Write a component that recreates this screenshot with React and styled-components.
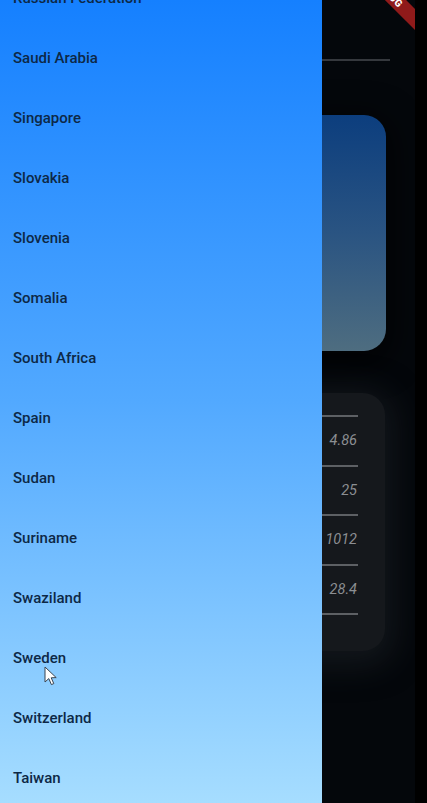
import React from "react";
import styled, { createGlobalStyle } from "styled-components";

const Global = createGlobalStyle`
  html, body { margin: 0; padding: 0; background: #000; }
  body { font-family: Roboto, "Noto Sans", sans-serif; }
  * { box-sizing: border-box; }
`;

const Screen = styled.div`
  display: flex;
  width: 427px;
  height: 803px;
  overflow: hidden;
  background: #000;
`;

const AppFrame = styled.div`
  position: relative;
  width: 415px;
  height: 803px;
  overflow: hidden;
  background: #04070b;
`;

const EdgeStrip = styled.div`
  flex: 1;
  background: #000;
`;

const Content = styled.div`
  display: flex;
  flex-direction: column;
  padding: 59px 25px 0 25px;
`;

const Divider = styled.div`
  height: 2px;
  background: #35383d;
`;

const BlueCard = styled.div`
  margin: 54px 4px 0 4px;
  height: 236px;
  border-radius: 22px;
  background: linear-gradient(180deg, #0c3e7e 0%, #2a5482 50%, #4e6d80 100%);
  box-shadow: 0 8px 30px 8px rgba(0, 0, 0, 0.6);
`;

const DarkCard = styled.div`
  margin: 42px 5px 0 4px;
  height: 258px;
  border-radius: 22px;
  background: #15181c;
  padding: 22px 27px 0 27px;
  display: flex;
  flex-direction: column;
  box-shadow: 0 6px 30px 10px rgba(30, 34, 40, 0.55);
`;

const StatLine = styled.div`
  height: 2px;
  background: #5d6064;
`;

const StatRow = styled.div`
  height: 47.5px;
  display: flex;
  align-items: center;
  justify-content: flex-end;
  padding-right: 1px;
  font-family: Roboto, sans-serif;
  font-style: italic;
  font-size: 14.5px;
  color: #8b8e92;
`;

const Banner = styled.div`
  position: absolute;
  top: -14px;
  right: -29px;
  width: 110px;
  height: 15px;
  transform: rotate(45deg);
  background: #8f1a1a;
  color: #fff;
  font-family: Roboto, sans-serif;
  font-weight: 900;
  font-size: 10px;
  line-height: 15px;
  text-align: center;
  letter-spacing: 0.5px;
`;

const Drawer = styled.nav`
  position: absolute;
  left: 0;
  top: 0;
  width: 322px;
  height: 803px;
  overflow: hidden;
  background: linear-gradient(180deg, #1580ff 0%, #52a9ff 50%, #a6ddff 100%);
`;

const CountryList = styled.ul`
  list-style: none;
  margin: -32px 0 0 0;
  padding: 0;
`;

const CountryItem = styled.li`
  height: 60px;
  display: flex;
  align-items: center;
  padding-left: 13px;
  font-family: Roboto, sans-serif;
  font-weight: 500;
  font-size: 15px;
  color: #0d2846;
`;

const Cursor = styled.svg`
  position: absolute;
  left: 44px;
  top: 666px;
  width: 14px;
  height: 20px;
`;

const countries = [
  "Russian Federation",
  "Saudi Arabia",
  "Singapore",
  "Slovakia",
  "Slovenia",
  "Somalia",
  "South Africa",
  "Spain",
  "Sudan",
  "Suriname",
  "Swaziland",
  "Sweden",
  "Switzerland",
  "Taiwan",
];

const stats = ["4.86", "25", "1012", "28.4"];

export default function App() {
  return (
    <>
      <Global />
      <Screen>
        <AppFrame>
          <Content>
            <Divider />
            <BlueCard />
            <DarkCard>
              {stats.map((v) => (
                <React.Fragment key={v}>
                  <StatLine />
                  <StatRow>{v}</StatRow>
                </React.Fragment>
              ))}
              <StatLine />
            </DarkCard>
          </Content>
          <Banner>DEBUG</Banner>
          <Drawer>
            <CountryList>
              {countries.map((c) => (
                <CountryItem key={c}>{c}</CountryItem>
              ))}
            </CountryList>
          </Drawer>
          <Cursor viewBox="0 0 14 20">
            <path
              d="M1 1 L1 16 L4.8 12.6 L7.4 18.6 L9.8 17.6 L7.2 11.8 L12.2 11.6 Z"
              fill="#fff"
              stroke="#3a4450"
              strokeWidth="1"
              strokeLinejoin="round"
            />
          </Cursor>
        </AppFrame>
        <EdgeStrip />
      </Screen>
    </>
  );
}
